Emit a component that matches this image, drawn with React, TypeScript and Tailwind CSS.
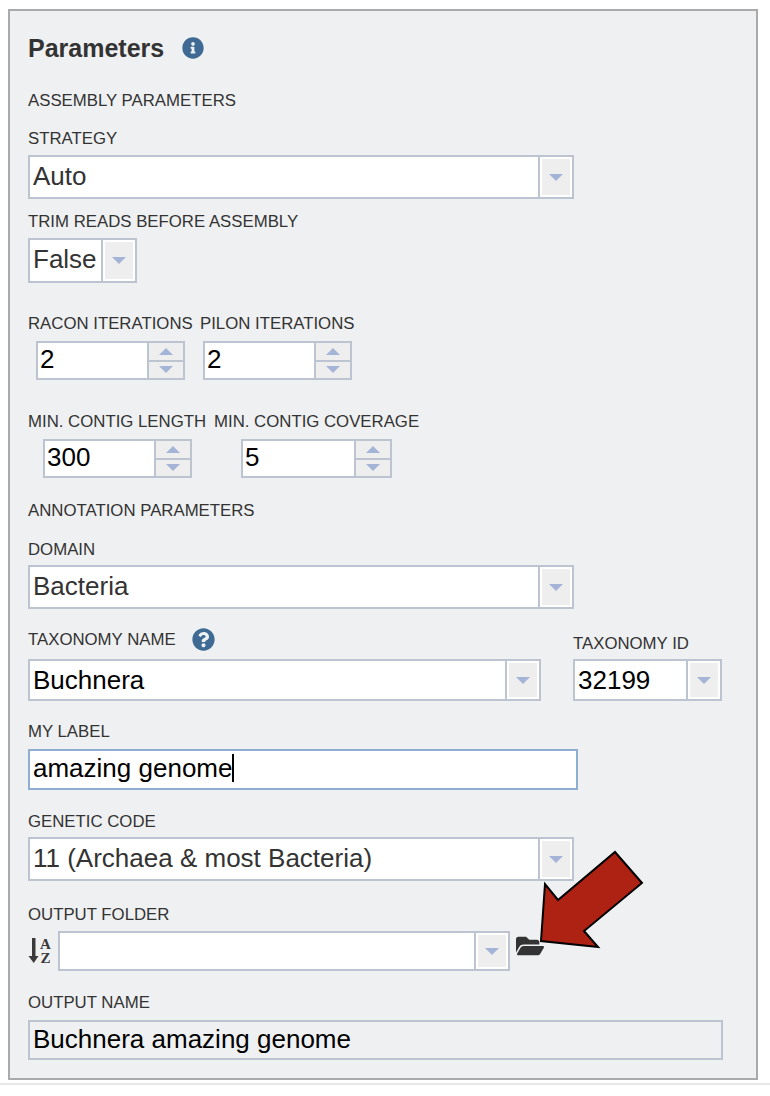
import React from 'react';
import { FaFolderOpen, FaInfoCircle, FaQuestionCircle } from 'react-icons/fa';

const Label: React.FC<{ text: string; className?: string }> = ({ text, className = '' }) => (
  <div className={`h-5 text-[16.8px] leading-[22px] whitespace-nowrap text-[#333] ${className}`}>{text}</div>
);

const Caret: React.FC<{ up?: boolean }> = ({ up }) => (
  <svg width="14" height="7" viewBox="0 0 14 7" className="block">
    <path d={up ? 'M7 0 L14 7 L0 7 Z' : 'M0 0 L14 0 L7 7 Z'} fill="#a3b4d6" />
  </svg>
);

interface SelectProps {
  value: string;
  width: string;
  height: string;
  textColor?: string;
  textPad?: string;
}

const Select: React.FC<SelectProps> = ({ value, width, height, textColor = 'text-[#333]', textPad = 'pb-[2px]' }) => (
  <div className={`flex bg-white border-2 border-[#bcc4d2] ${width} ${height}`}>
    <div className={`flex-1 pl-[3px] text-[26px] leading-none flex items-center whitespace-nowrap overflow-hidden ${textColor} ${textPad}`}>
      {value}
    </div>
    <div className="w-[34px] border-l-2 border-[#bcc4d2] bg-white p-[2px]">
      <div className="h-full bg-[#eeeeee] flex items-center justify-center">
        <Caret />
      </div>
    </div>
  </div>
);

const Spinner: React.FC<{ value: string; className: string }> = ({ value, className }) => (
  <div className={`flex h-[39px] bg-white border-2 border-[#bcc4d2] ${className}`}>
    <div className="flex-1 pl-[2px] pb-[3px] text-[26px] leading-none flex items-center text-black">{value}</div>
    <div className="w-[36px] border-l-2 border-[#bcc4d2] flex flex-col bg-[#eeeeee]">
      <div className="flex-1 flex items-center justify-center border-b-2 border-[#bcc4d2]">
        <Caret up />
      </div>
      <div className="flex-1 flex items-center justify-center">
        <Caret />
      </div>
    </div>
  </div>
);

export default function App() {
  return (
    <div className="h-[1096px] overflow-hidden bg-white font-['Liberation_Sans',Arial,sans-serif]">
      <div className="pt-[9px] pl-[8px]">
        <div className="relative w-[750px] h-[1071px] border-2 border-[#aaaaaa] bg-[#eff0f2] pl-[18px]">
          <div className="pt-[22px] flex items-center h-[52px]">
            <h2 className="text-[25px] font-bold text-[#333] leading-none">Parameters</h2>
            <FaInfoCircle className="ml-[18px] text-[#3e6a94]" size={22} />
          </div>

          <Label text="ASSEMBLY PARAMETERS" className="mt-[27px]" />

          <Label text="STRATEGY" className="mt-[18px]" />
          <div className="mt-[7px]">
            <Select value="Auto" width="w-[546px]" height="h-[44px]" />
          </div>

          <Label text="TRIM READS BEFORE ASSEMBLY" className="mt-[12px]" />
          <div className="mt-[7px]">
            <Select value="False" width="w-[109px]" height="h-[45px]" textPad="pb-[4px]" />
          </div>

          <div className="mt-[30px] flex">
            <div className="w-[172px]">
              <Label text="RACON ITERATIONS" />
              <div className="mt-[8px]">
                <Spinner value="2" className="ml-[8px] w-[149px]" />
              </div>
            </div>
            <div>
              <Label text="PILON ITERATIONS" />
              <div className="mt-[8px]">
                <Spinner value="2" className="ml-[3px] w-[149px]" />
              </div>
            </div>
          </div>

          <div className="mt-[31px] flex">
            <div className="w-[186px]">
              <Label text="MIN. CONTIG LENGTH" />
              <div className="mt-[8px]">
                <Spinner value="300" className="ml-[15px] w-[149px]" />
              </div>
            </div>
            <div>
              <Label text="MIN. CONTIG COVERAGE" />
              <div className="mt-[8px]">
                <Spinner value="5" className="ml-[27px] w-[151px]" />
              </div>
            </div>
          </div>

          <Label text="ANNOTATION PARAMETERS" className="mt-[22px]" />

          <Label text="DOMAIN" className="mt-[19px]" />
          <div className="mt-[6px]">
            <Select value="Bacteria" width="w-[546px]" height="h-[44px]" />
          </div>

          <div className="mt-[20px] flex">
            <div className="w-[545px]">
              <div className="flex items-center h-5">
                <Label text="TAXONOMY NAME" />
                <FaQuestionCircle className="ml-[16px] text-[#3e6a94]" size={23} />
              </div>
              <div className="mt-[10px]">
                <Select value="Buchnera" width="w-[513px]" height="h-[42px]" textColor="text-black" textPad="pb-0" />
              </div>
            </div>
            <div>
              <Label text="TAXONOMY ID" className="mt-[4px]" />
              <div className="mt-[6px]">
                <Select value="32199" width="w-[149px]" height="h-[42px]" textColor="text-black" textPad="pb-0" />
              </div>
            </div>
          </div>

          <Label text="MY LABEL" className="mt-[20px]" />
          <div className="mt-[8px] w-[550px] h-[41px] bg-white border-2 border-[#8fadd0] pl-[3px] pb-[3px] flex items-center text-[26px] leading-none text-black">
            amazing genome
            <span className="inline-block w-[2px] h-[28px] bg-black" />
          </div>

          <Label text="GENETIC CODE" className="mt-[21px]" />
          <div className="mt-[6px]">
            <Select value="11 (Archaea & most Bacteria)" width="w-[546px]" height="h-[44px]" />
          </div>

          <Label text="OUTPUT FOLDER" className="mt-[23px]" />
          <div className="mt-[7px] flex items-center">
            <div className="w-[30px] h-[27px] flex -mt-[2px]">
              <svg width="11" height="27" viewBox="0 0 11 27" className="block">
                <path d="M4 1 H7.5 V19 H10.5 L5.75 26 L0.5 19 H4 Z" fill="#3a3a3a" />
              </svg>
              <div className="ml-[1px] flex flex-col items-center font-['Liberation_Serif',serif] font-bold text-[15px] leading-[14px] text-[#3a3a3a]">
                <span>A</span>
                <span>Z</span>
              </div>
            </div>
            <Select value="" width="w-[452px]" height="h-[40px]" />
            <FaFolderOpen className="ml-[6px] mb-[10px] text-[#333]" size={28} />
          </div>

          <Label text="OUTPUT NAME" className="mt-[21px]" />
          <div className="mt-[8px] w-[695px] h-[40px] border-2 border-[#bcc4d2] pl-[3px] pb-[2px] flex items-center text-[26px] leading-none text-black">
            Buchnera amazing genome
          </div>

          <svg className="absolute left-[519px] top-[829px]" width="110" height="105" viewBox="529 840 110 105" overflow="visible">
            <path d="M615 852 L642 883 L584 931 L598 947 L541 941 L545 884 L558 900 Z" fill="#ae2214" stroke="#000" strokeWidth="2" />
          </svg>
        </div>
        <div className="h-[2px] mt-[3px] -ml-[8px] bg-[#e8e8e8]" />
      </div>
    </div>
  );
}
